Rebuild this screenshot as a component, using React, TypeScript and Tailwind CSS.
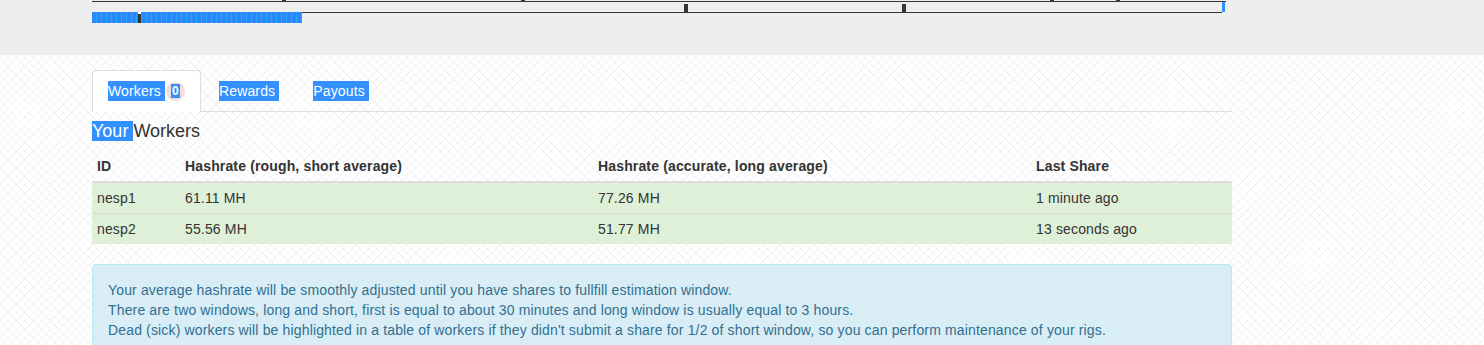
import React from "react";

const WORKERS = [
  { id: "nesp1", rough: "61.11 MH", accurate: "77.26 MH", last: "1 minute ago" },
  { id: "nesp2", rough: "55.56 MH", accurate: "51.77 MH", last: "13 seconds ago" },
];

function Sel({ children }: { children: React.ReactNode }) {
  return <span className="whitespace-pre bg-[#3390ff] text-white">{children}</span>;
}

function Timeline() {
  const stripes = Array.from({ length: 42 }, (_, i) => 4 + i * 5);
  return (
    <svg width="1140" height="25" className="block">
      <rect x="0" y="1" width="1134" height="1" fill="#333" />
      {[190, 429, 958, 1024].map((x) => (
        <rect key={x} x={x} y="0" width="4" height="2" fill="#3a3a3a" />
      ))}
      <rect x="0" y="12" width="1130" height="1" fill="#333" />
      {[592, 810].map((x) => (
        <rect key={x} x={x} y="4" width="4" height="8" fill="#333" />
      ))}
      <rect x="1130" y="2" width="3" height="10" fill="#3390ff" />
      <rect x="0" y="12" width="210" height="11" fill="#2b88ff" />
      {stripes.map((x) => (
        <rect key={x} x={x} y="13" width="1" height="10" fill="#22aaff" />
      ))}
      <rect x="46" y="12" width="3" height="2" fill="#fff" />
      <rect x="46" y="14" width="3" height="9" fill="#333" />
    </svg>
  );
}

export default function App() {
  return (
    <div className="min-h-[345px] bg-white bg-[repeating-linear-gradient(45deg,#f4f4f4_0,#f4f4f4_1px,transparent_1px,transparent_6px),repeating-linear-gradient(-45deg,#f4f4f4_0,#f4f4f4_1px,transparent_1px,transparent_6px)] font-['Liberation_Sans',Arial,sans-serif] text-[14px] leading-[20px] tracking-[0.15px] text-[#333]">
      <div className="h-[55px] bg-[#eeeeee] pl-[92px]">
        <Timeline />
      </div>

      <div className="ml-[92px] w-[1140px] pt-[15px]">
        <ul className="flex border-b border-[#ddd]">
          <li className="-mb-px mr-[2px]">
            <span className="flex h-[42px] items-center rounded-t border border-[#ddd] border-b-transparent bg-white px-[15px] text-[#555]">
              <Sel>Workers </Sel>
              <span className="ml-[1px] flex h-[19px] w-[19px] items-center justify-center rounded-full bg-[#f4dcdc] text-[12px] font-bold leading-none">
                <span className="bg-[#3390ff] px-[1px] py-[1px] text-white">0</span>
              </span>
            </span>
          </li>
          {["Rewards", "Payouts"].map((t) => (
            <li key={t} className="-mb-px mr-[2px]">
              <span className="flex h-[42px] items-center border border-transparent px-[15px]">
                <Sel>{t} </Sel>
              </span>
            </li>
          ))}
        </ul>

        <h4 className="mb-[10px] mt-[9px] text-[18px] leading-[20px] tracking-normal text-[#333]">
          <Sel>Your </Sel>Workers
        </h4>

        <table className="w-full border-collapse">
          <thead>
            <tr className="border-b-2 border-[#ddd]">
              <th className="w-[88px] px-[5px] py-[5px] text-left font-bold">ID</th>
              <th className="w-[413px] px-[5px] py-[5px] text-left font-bold">Hashrate (rough, short average)</th>
              <th className="w-[438px] px-[5px] py-[5px] text-left font-bold">Hashrate (accurate, long average)</th>
              <th className="px-[5px] py-[5px] text-left font-bold">Last Share</th>
            </tr>
          </thead>
          <tbody>
            {WORKERS.map((w, i) => (
              <tr key={w.id} className={i > 0 ? "border-t border-[#d6dcd2] bg-[#dff0d8]" : "bg-[#dff0d8]"}>
                <td className="px-[5px] py-[5px]">{w.id}</td>
                <td className="px-[5px] py-[5px]">{w.rough}</td>
                <td className="px-[5px] py-[5px]">{w.accurate}</td>
                <td className="px-[5px] py-[5px]">{w.last}</td>
              </tr>
            ))}
          </tbody>
        </table>

        <div className="mt-[20px] rounded border border-[#bce8f1] bg-[#d9edf7] p-[15px] text-[#31708f]">
          Your average hashrate will be smoothly adjusted until you have shares to fullfill estimation window.
          <br />
          There are two windows, long and short, first is equal to about 30 minutes and long window is usually equal to 3 hours.
          <br />
          Dead (sick) workers will be highlighted in a table of workers if they didn't submit a share for 1/2 of short window, so you can perform maintenance of your rigs.
        </div>
      </div>
    </div>
  );
}
